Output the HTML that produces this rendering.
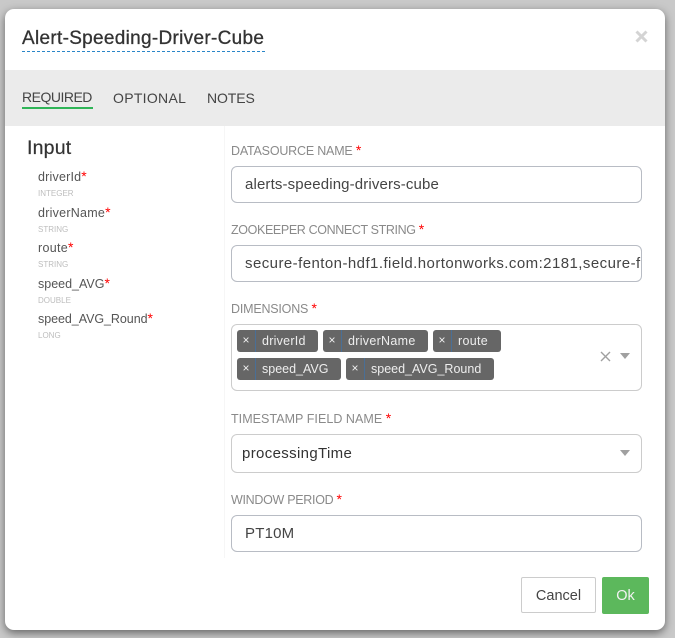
<!DOCTYPE html>
<html>
<head>
<meta charset="utf-8">
<style>
html,body{margin:0;padding:0;}
body{width:675px;height:638px;position:relative;overflow:hidden;background:#c9c9c9;font-family:"Liberation Sans",sans-serif;color:#333;}
.t{position:absolute;white-space:nowrap;line-height:1;}
.modal{position:absolute;left:5px;top:9px;width:660px;height:621px;background:#fff;border-radius:9px;box-shadow:0 3px 9px rgba(0,0,0,.5);}
.tabs{position:absolute;left:5px;top:70px;width:660px;height:56px;background:#ebebeb;}
.box{position:absolute;left:231px;width:409px;background:#fff;border:1px solid #b8bcc4;border-radius:6px;}
.lab{font-size:12.5px;color:#8a8a8a;}
.lab b{color:#f00;font-weight:400;font-size:14px;letter-spacing:0;line-height:0;}
.val{font-size:15px;color:#444;}
.in{font-size:12.5px;color:#555;}
.in b{color:#f00;font-weight:400;font-size:14px;line-height:0;}
.ty{font-size:8px;color:#bdbdbd;}
.chip{position:absolute;height:22px;background:#666;border-radius:3px;color:#eee;}
.chip i{position:absolute;left:0;top:0;width:18px;height:22px;border-right:1px solid #4a6f96;font-style:normal;font-size:12px;line-height:20px;text-align:center;color:#eee;box-sizing:content-box;}
.chip span{position:absolute;left:25px;top:4px;font-size:12.5px;line-height:14px;white-space:nowrap;}
.caret{position:absolute;width:0;height:0;border-left:5.5px solid transparent;border-right:5.5px solid transparent;border-top:6px solid #a0a0a0;}
</style>
</head>
<body>
<div class="modal"></div>
<div class="tabs"></div>

<div class="t" style="left:22px;top:29px;font-size:19px;font-weight:400;color:#333;letter-spacing:.3px;-webkit-text-stroke:.3px #333;">Alert-Speeding-Driver-Cube</div>
<div style="position:absolute;left:22px;top:51px;width:243px;border-top:1px dashed #2a86c8;"></div>
<svg style="position:absolute;left:635px;top:30px" width="13" height="13" viewBox="0 0 13 13"><path d="M1.5 1.5L11.5 11.5M11.5 1.5L1.5 11.5" stroke="#d4d4d4" stroke-width="3"/></svg>

<div class="t" style="left:22px;top:90px;font-size:14px;color:#444;letter-spacing:-.5px;">REQUIRED</div>
<div style="position:absolute;left:22px;top:107px;width:71px;height:2px;background:#2fb457;"></div>
<div class="t" style="left:113px;top:91px;font-size:14px;color:#444;letter-spacing:.3px;">OPTIONAL</div>
<div class="t" style="left:207px;top:91px;font-size:14px;color:#444;letter-spacing:-.1px;">NOTES</div>

<div style="position:absolute;left:224px;top:126px;width:1px;height:432px;background:#f6f6f6;"></div>

<div class="t" style="left:27px;top:139px;font-size:19.5px;color:#333;letter-spacing:.2px;-webkit-text-stroke:.2px #333;">Input</div>
<div class="t in" style="left:38px;top:171px;letter-spacing:.2px;">driverId<b>*</b></div>
<div class="t ty" style="left:38px;top:190px;">INTEGER</div>
<div class="t in" style="left:38px;top:207px;letter-spacing:.25px;">driverName<b>*</b></div>
<div class="t ty" style="left:38px;top:226px;">STRING</div>
<div class="t in" style="left:38px;top:242px;letter-spacing:.3px;">route<b>*</b></div>
<div class="t ty" style="left:38px;top:261px;">STRING</div>
<div class="t in" style="left:38px;top:278px;">speed_AVG<b>*</b></div>
<div class="t ty" style="left:38px;top:297px;">DOUBLE</div>
<div class="t in" style="left:38px;top:313px;letter-spacing:-.05px;">speed_AVG_Round<b>*</b></div>
<div class="t ty" style="left:38px;top:332px;">LONG</div>

<div class="t lab" style="left:231px;top:145px;letter-spacing:-.2px;">DATASOURCE NAME <b>*</b></div>
<div class="box" style="top:166px;height:35px;"></div>
<div class="t val" style="left:245px;top:177px;letter-spacing:.14px;">alerts-speeding-drivers-cube</div>

<div class="t lab" style="left:231px;top:224px;letter-spacing:-.37px;">ZOOKEEPER CONNECT STRING <b>*</b></div>
<div class="box" style="top:245px;height:35px;"></div>
<div class="t val" style="left:245px;top:256px;width:397px;overflow:hidden;letter-spacing:.44px;">secure-fenton-hdf1.field.hortonworks.com:2181,secure-f</div>

<div class="t lab" style="left:231px;top:303px;letter-spacing:-.2px;">DIMENSIONS <b>*</b></div>
<div class="box" style="top:324px;height:65px;border-color:#ccc;"></div>
<div class="chip" style="left:237px;top:330px;width:81px;"><i>×</i><span style="letter-spacing:.25px;">driverId</span></div>
<div class="chip" style="left:323px;top:330px;width:105px;"><i>×</i><span style="letter-spacing:.3px;">driverName</span></div>
<div class="chip" style="left:433px;top:330px;width:68px;"><i>×</i><span style="letter-spacing:.3px;">route</span></div>
<div class="chip" style="left:237px;top:358px;width:104px;"><i>×</i><span>speed_AVG</span></div>
<div class="chip" style="left:346px;top:358px;width:148px;"><i>×</i><span>speed_AVG_Round</span></div>
<svg style="position:absolute;left:600px;top:350.5px" width="11" height="11" viewBox="0 0 11 11"><path d="M1 1L10 10M10 1L1 10" stroke="#a0a0a0" stroke-width="1.4"/></svg>
<div class="caret" style="left:620px;top:353px;"></div>

<div class="t lab" style="left:231px;top:413px;letter-spacing:.05px;">TIMESTAMP FIELD NAME <b>*</b></div>
<div class="box" style="top:434px;height:37px;border-color:#ccc;"></div>
<div class="t val" style="left:242px;top:446px;color:#333;letter-spacing:.35px;">processingTime</div>
<div class="caret" style="left:620px;top:450px;"></div>

<div class="t lab" style="left:231px;top:494px;letter-spacing:-.3px;">WINDOW PERIOD <b>*</b></div>
<div class="box" style="top:515px;height:35px;"></div>
<div class="t val" style="left:245px;top:526px;letter-spacing:.2px;">PT10M</div>

<div style="position:absolute;left:521px;top:577px;width:73px;height:34px;border:1px solid #ccc;border-radius:2px;background:#fff;font-size:14.5px;line-height:36px;text-align:center;color:#444;">Cancel</div>
<div style="position:absolute;left:602px;top:577px;width:47px;height:37px;background:#5cb85c;border-radius:2px;font-size:14.5px;line-height:38px;text-align:center;color:#f2f2f2;">Ok</div>
</body>
</html>
